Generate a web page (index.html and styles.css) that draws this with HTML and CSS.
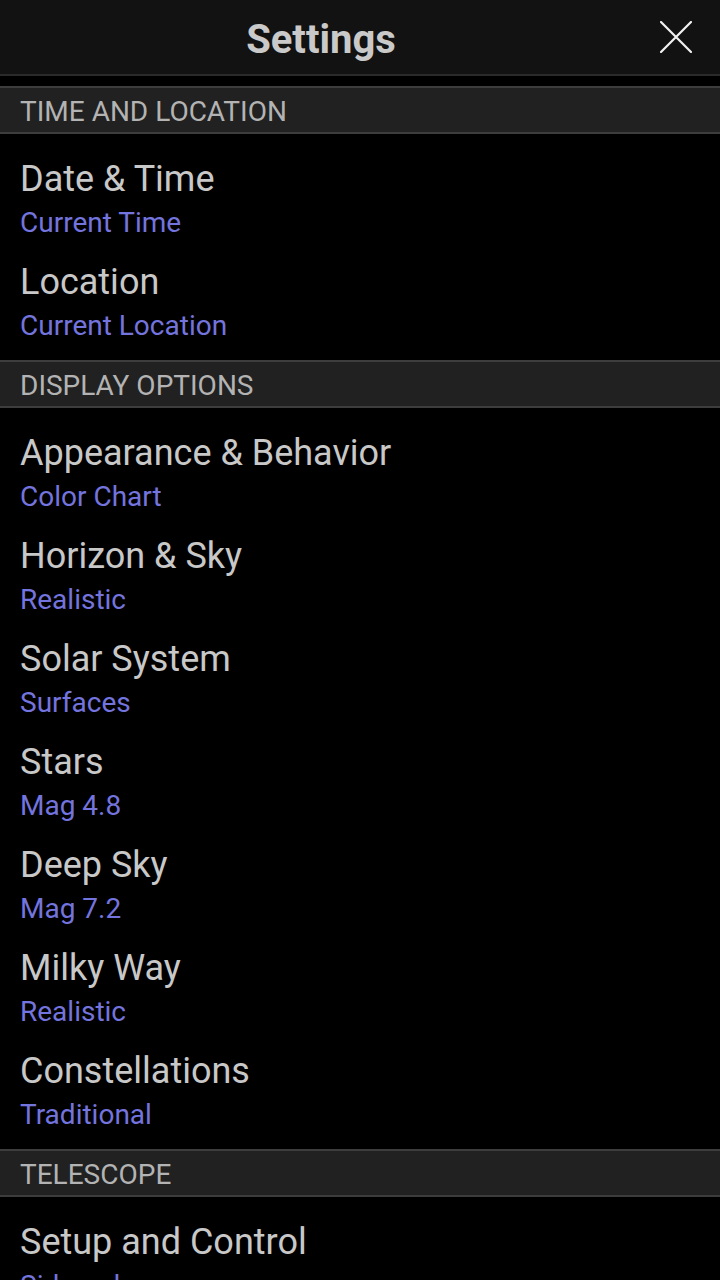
FILE: index.html
```html
<!DOCTYPE html>
<html>
<head>
<meta charset="utf-8">
<link rel="stylesheet" href="styles.css">
</head>
<body>
<div class="screen">
  <header class="topbar">
    <div class="title">Settings</div>
    <div class="close">
      <svg width="32" height="32" viewBox="0 0 32 32"><path d="M1 1 L31 31 M31 1 L1 31" stroke="#f2f2f2" stroke-width="2.2" fill="none" stroke-linecap="round"/></svg>
    </div>
  </header>

  <div class="section-head">TIME AND LOCATION</div>
  <div class="list">
    <div class="item"><div class="item-title">Date &amp; Time</div><div class="item-sub">Current Time</div></div>
    <div class="item"><div class="item-title">Location</div><div class="item-sub">Current Location</div></div>
  </div>

  <div class="section-head">DISPLAY OPTIONS</div>
  <div class="list">
    <div class="item"><div class="item-title">Appearance &amp; Behavior</div><div class="item-sub">Color Chart</div></div>
    <div class="item"><div class="item-title">Horizon &amp; Sky</div><div class="item-sub">Realistic</div></div>
    <div class="item"><div class="item-title">Solar System</div><div class="item-sub">Surfaces</div></div>
    <div class="item"><div class="item-title">Stars</div><div class="item-sub">Mag 4.8</div></div>
    <div class="item"><div class="item-title">Deep Sky</div><div class="item-sub">Mag 7.2</div></div>
    <div class="item"><div class="item-title">Milky Way</div><div class="item-sub">Realistic</div></div>
    <div class="item"><div class="item-title">Constellations</div><div class="item-sub">Traditional</div></div>
  </div>

  <div class="section-head">TELESCOPE</div>
  <div class="list">
    <div class="item"><div class="item-title">Setup and Control</div><div class="item-sub">Sidereal</div></div>
  </div>
</div>
</body>
</html>
```

FILE: styles.css
```css
html, body {
  margin: 0;
  padding: 0;
  background: #000;
}
body {
  font-family: Roboto, "Liberation Sans", sans-serif;
  width: 720px;
  height: 1280px;
  overflow: hidden;
}
.screen {
  display: flex;
  flex-direction: column;
}
.topbar {
  display: flex;
  align-items: center;
  height: 74px;
  background: #121212;
  border-bottom: 2px solid #2a2a2a;
  margin-bottom: 10px;
}
.title {
  flex: 1;
  text-align: center;
  font-size: 40px;
  font-weight: 700;
  color: #c9c9c9;
  line-height: 74px;
  padding-top: 3px;
  height: 74px;
  box-sizing: border-box;
}
.close {
  width: 68px;
  margin-right: 10px;
  display: flex;
  justify-content: center;
  align-items: center;
}
.close svg { display: block; }
.section-head {
  background: #212121;
  border-top: 2px solid #3d3d3d;
  border-bottom: 2px solid #3d3d3d;
  height: 40px;
  padding: 4px 0 0 20px;
  line-height: 40px;
  font-size: 28px;
  color: #b3b3b3;
}
.list {
  padding: 10px 0;
}
.item {
  padding: 14px 20px 7px 20px;
  height: 82px;
}
.item-title {
  font-size: 36px;
  line-height: 42px;
  color: #c8c8c8;
  white-space: nowrap;
}
.item-sub {
  margin-top: 6px;
  font-size: 28px;
  line-height: 34px;
  color: #7474de;
  white-space: nowrap;
}
```
